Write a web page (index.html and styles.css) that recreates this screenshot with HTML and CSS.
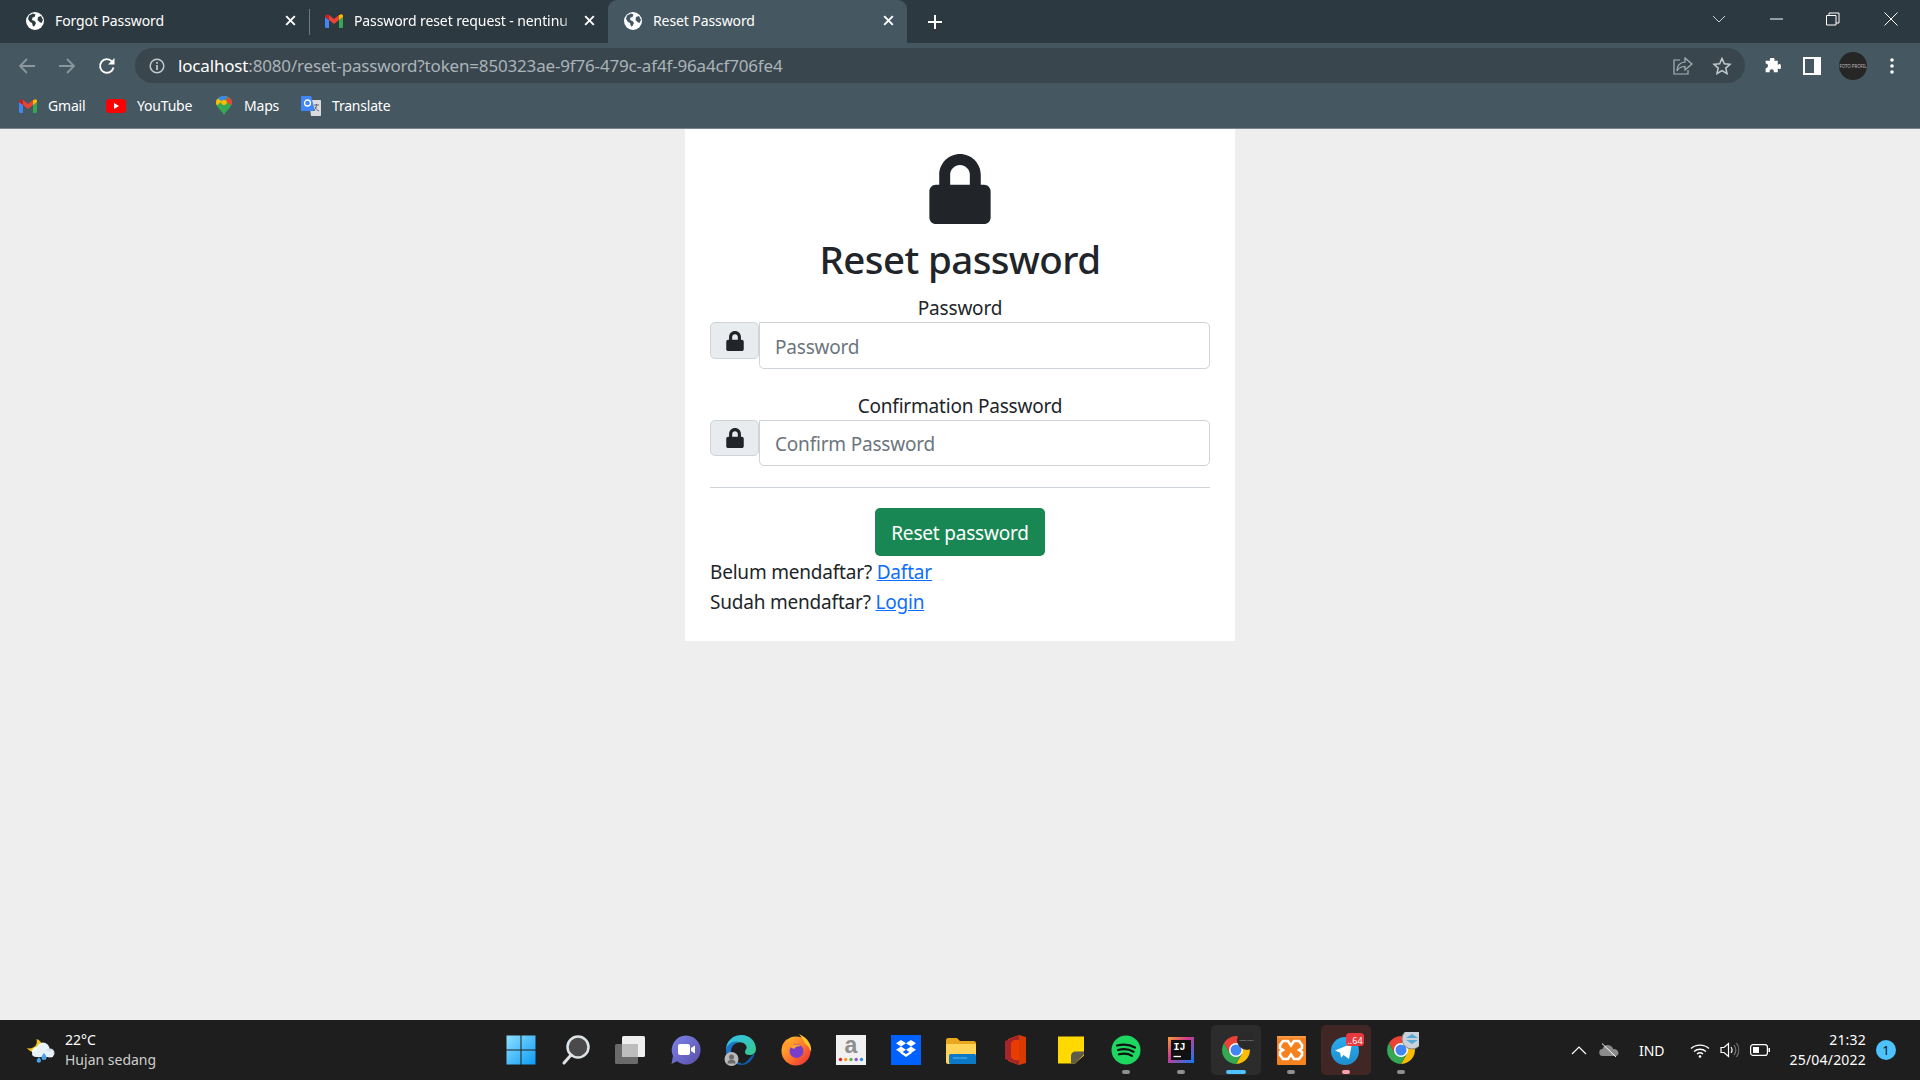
FILE: index.html
```html
<!DOCTYPE html>
<html lang="en">
<head>
    <meta charset="UTF-8">
    <meta name="viewport" content="width=device-width, initial-scale=1.0">
    <title>Reset Password</title>
    <link rel="stylesheet" href="styles.css">
</head>
<body>
    <header class="browser">
        <div class="tabstrip">
            <div class="tab">
                <svg class="favicon" viewBox="0 0 18 18"><circle cx="9" cy="9" r="9" fill="#fff"/><path d="M3 3.5l4-2 2.5 1-1 2.5-2 .5-.5 2.5 2.5 1 1.5 2-1.5 3-1.5.5-1-3.5-2-1-2-3zM12 5l3-1 2 4-1.5 3-2-1-2-2z" fill="#2d3a42"/></svg>
                <span class="tab-title">Forgot Password</span>
                <svg class="tab-close" viewBox="0 0 12 12"><path d="M2 2l8 8M10 2l-8 8" stroke="#fff" stroke-width="1.8"/></svg>
            </div>
            <div class="tab tab-sep">
                <svg class="favicon" viewBox="0 0 18 14"><path d="M0 3v9.500c0 .8.600 1.500 1.300 1.500H4V6z" fill="#4285f4"/><path d="M14 14h2.700c.7 0 1.300-.7 1.300-1.500V3l-4 3z" fill="#34a853"/><path d="M14 1v5l4-3V2c0-1.700-2.400-2.400-3-1z" fill="#fbbc04"/><path d="M4 6V1l5 4 5-4v5l-5 4z" fill="#ea4335"/><path d="M0 3l4 3V1C3 .3 0 0 0 3z" fill="#c5221f"/></svg>
                <span class="tab-title tab-fade">Password reset request - nentinu</span>
                <svg class="tab-close" viewBox="0 0 12 12"><path d="M2 2l8 8M10 2l-8 8" stroke="#fff" stroke-width="1.8"/></svg>
            </div>
            <div class="tab tab-active">
                <svg class="favicon" viewBox="0 0 18 18"><circle cx="9" cy="9" r="9" fill="#fff"/><path d="M3 3.5l4-2 2.5 1-1 2.5-2 .5-.5 2.5 2.5 1 1.5 2-1.5 3-1.5.5-1-3.5-2-1-2-3zM12 5l3-1 2 4-1.5 3-2-1-2-2z" fill="#455761"/></svg>
                <span class="tab-title">Reset Password</span>
                <svg class="tab-close" viewBox="0 0 12 12"><path d="M2 2l8 8M10 2l-8 8" stroke="#fff" stroke-width="1.8"/></svg>
            </div>
            <svg class="new-tab" viewBox="0 0 16 16"><path d="M8 1v14M1 8h14" stroke="#fff" stroke-width="2"/></svg>
            <div class="window-controls">
                <svg class="win-chevron" viewBox="0 0 14 8"><path d="M1 1l6 6 6-6" fill="none" stroke="#c8d0d4"/></svg>
                <svg class="win-btn" viewBox="0 0 14 14"><path d="M0 7h13" stroke="#fff"/></svg>
                <svg class="win-btn win-restore" viewBox="0 0 14 14"><path d="M.5 3.5H10V13H.5zM3 3.5V1h10v10h-3" fill="none" stroke="#fff"/></svg>
                <svg class="win-btn" viewBox="0 0 14 14"><path d="M.5.5l13 13M13.5.5l-13 13" stroke="#fff"/></svg>
            </div>
        </div>
        <div class="toolbar">
            <svg class="nav-icon" viewBox="0 0 18 18"><path d="M17 9H2M9 2L2 9l7 7" fill="none" stroke="#8b979e" stroke-width="1.8"/></svg>
            <svg class="nav-icon" viewBox="0 0 18 18"><path d="M1 9h15M9 2l7 7-7 7" fill="none" stroke="#8b979e" stroke-width="1.8"/></svg>
            <svg class="nav-icon" viewBox="0 0 18 18"><path d="M15.5 10.5A6.800 6.800 0 1 1 14 4.500" fill="none" stroke="#fff" stroke-width="1.9"/><path d="M16.5 1v6.500H10z" fill="#fff"/></svg>
            <div class="omnibox">
                <svg class="site-info" viewBox="0 0 16 16"><circle cx="8" cy="8" r="6.800" fill="none" stroke="#c4cbcf" stroke-width="1.5"/><path d="M8 7v5M8 4v1.800" stroke="#c4cbcf" stroke-width="1.7"/></svg>
                <span class="url"><span class="url-host">localhost</span>:8080/reset-password?token=850323ae-9f76-479c-af4f-96a4cf706fe4</span>
                <svg class="omni-icon" viewBox="0 0 20 18"><path d="M12 1l7 6-7 6V9.500C8 9.500 5.500 11 4 14c0-5 3-8.500 8-9zM7 3H1v14h14v-4" fill="none" stroke="#a9b3b8" stroke-width="1.2"/></svg>
                <svg class="omni-icon" viewBox="0 0 20 18"><path d="M10 1.500l2.400 5.200 5.600.6-4.200 3.800 1.200 5.500-5-2.900-5 2.900 1.200-5.500L2 7.300l5.600-.6z" fill="none" stroke="#c4cbcf" stroke-width="1.5"/></svg>
            </div>
            <div class="toolbar-actions">
                <svg class="action-icon action-puzzle" viewBox="0 0 18 18"><path d="M7 1.500h3.500a2 2 0 0 1 0 2.500H14v4a2 2 0 0 1 3 0v3a2 2 0 0 1-3 0v4H10a2 2 0 1 0-3.500 0H2.500v-4a2 2 0 1 0 0-4.500V4H7a2 2 0 0 1 0-2.500z" fill="#fff" transform="translate(0 .5)"/></svg>
                <svg class="action-icon" viewBox="0 0 18 18"><path d="M0 0h18v18H0zM2 2v14h9V2z" fill="#fff" fill-rule="evenodd"/></svg>
                <div class="avatar">FOTO PROFIL</div>
                <svg class="action-dots" viewBox="0 0 4 16"><circle cx="2" cy="2" r="1.800" fill="#fff"/><circle cx="2" cy="8" r="1.800" fill="#fff"/><circle cx="2" cy="14" r="1.800" fill="#fff"/></svg>
            </div>
        </div>
        <div class="bookmarks">
            <a class="bookmark bookmark-gmail">
                <svg class="bookmark-icon" viewBox="0 0 18 14"><path d="M0 3v9.500c0 .8.600 1.500 1.300 1.500H4V6z" fill="#4285f4"/><path d="M14 14h2.700c.7 0 1.300-.7 1.300-1.500V3l-4 3z" fill="#34a853"/><path d="M14 1v5l4-3V2c0-1.700-2.400-2.400-3-1z" fill="#fbbc04"/><path d="M4 6V1l5 4 5-4v5l-5 4z" fill="#ea4335"/><path d="M0 3l4 3V1C3 .3 0 0 0 3z" fill="#c5221f"/></svg>
                Gmail
            </a>
            <a class="bookmark bookmark-youtube">
                <svg class="bookmark-icon" viewBox="0 0 20 14"><rect width="20" height="14" rx="3.500" fill="#f00"/><path d="M8 4l5 3-5 3z" fill="#fff"/></svg>
                YouTube
            </a>
            <a class="bookmark bookmark-maps">
                <svg class="bookmark-icon" viewBox="0 0 16 22" preserveAspectRatio="none"><path d="M8 22C6 17 0 13 0 7.500 0 3 3.500 0 8 0s8 3 8 7.500C16 13 10 17 8 22z" fill="#34a853"/><path d="M2 3l4 3-5 5C.3 9.800 0 8.600 0 7.500 0 5.800.7 4.200 2 3z" fill="#fbbc04"/><path d="M2 3C3.500 1 5.800 0 8 0c1.300 0 2.500.3 3.500.8L6 6z" fill="#4285f4"/><path d="M11.500.8C14 2 16 4.500 16 7.500c0 1.100-.3 2.200-.8 3.300L10 6z" fill="#ea4335"/><circle cx="8" cy="7.500" r="2.800" fill="#fbbc04"/></svg>
                Maps
            </a>
            <a class="bookmark bookmark-translate">
                <svg class="bookmark-icon" viewBox="0 0 20 20"><path d="M8 4h11c.6 0 1 .4 1 1v14c0 .6-.4 1-1 1H10z" fill="#dadce0"/><path d="M1 0h9l4 15H1c-.6 0-1-.4-1-1V1c0-.6.400-1 1-1z" fill="#4285f4"/><circle cx="6.500" cy="7" r="3" fill="none" stroke="#fff" stroke-width="1.3"/><path d="M13 9h5M15.500 8v1.500c0 2-1.500 4-3 5M14 11c.8 2 2 3 4 4" fill="none" stroke="#5f6368"/></svg>
                Translate
            </a>
        </div>
    </header>

    <main class="page">
        <div class="card">
            <svg class="card-lock" viewBox="0 0 448 512"><path d="M400 224h-24v-72C376 68.200 307.800 0 224 0S72 68.200 72 152v72H48c-26.500 0-48 21.500-48 48v192c0 26.500 21.500 48 48 48h352c26.500 0 48-21.500 48-48V272c0-26.500-21.500-48-48-48zm-104 0H152v-72c0-39.700 32.300-72 72-72s72 32.300 72 72v72z"/></svg>
            <h1 class="card-title">Reset password</h1>
            <form>
                <label class="field-label" for="password">Password</label>
                <div class="input-group">
                    <span class="addon"><svg class="addon-lock" viewBox="0 0 448 512"><path d="M400 224h-24v-72C376 68.200 307.800 0 224 0S72 68.200 72 152v72H48c-26.500 0-48 21.500-48 48v192c0 26.500 21.500 48 48 48h352c26.500 0 48-21.500 48-48V272c0-26.500-21.500-48-48-48zm-104 0H152v-72c0-39.700 32.300-72 72-72s72 32.300 72 72v72z"/></svg></span>
                    <input class="field" id="password" type="password" placeholder="Password">
                </div>
                <label class="field-label" for="confirm">Confirmation Password</label>
                <div class="input-group input-group-short">
                    <span class="addon"><svg class="addon-lock" viewBox="0 0 448 512"><path d="M400 224h-24v-72C376 68.200 307.800 0 224 0S72 68.200 72 152v72H48c-26.500 0-48 21.500-48 48v192c0 26.500 21.500 48 48 48h352c26.500 0 48-21.500 48-48V272c0-26.500-21.500-48-48-48zm-104 0H152v-72c0-39.700 32.300-72 72-72s72 32.300 72 72v72z"/></svg></span>
                    <input class="field" id="confirm" type="password" placeholder="Confirm Password">
                </div>
                <hr class="divider">
                <button class="submit" type="submit">Reset password</button>
            </form>
            <p class="card-link">Belum mendaftar? <a href="#">Daftar</a></p>
            <p class="card-link">Sudah mendaftar? <a href="#">Login</a></p>
        </div>
    </main>

    <footer class="taskbar">
        <div class="weather">
            <svg class="weather-icon" viewBox="0 0 28 26"><path d="M0 11c3 1 7 0 9-3 1-2 1-4 .5-6 4 1 6 5 5 8-1 4-5 6-9 5-2-.5-4-2-5.500-4z" fill="#f5c518"/><circle cx="10" cy="15" r="5" fill="#fff"/><circle cx="16" cy="12" r="6.500" fill="#eaf2fa"/><circle cx="23" cy="16" r="4.500" fill="#d6e2ee"/><path d="M8 14h18v6H10c-3 0-5-1-5-3z" fill="#e8f0f8"/><path d="M17 16c1.500 2 2.500 3 2.500 4.500a2.500 2.500 0 0 1-5 0c0-1.500 1-2.500 2.500-4.500zM12 20c1 1.500 2 2.500 2 3.500a2.200 2.200 0 0 1-4.400 0c0-1 1.400-2 2.400-3.500z" fill="#4aa3e8"/></svg>
            <div class="weather-text">
                <div class="weather-temp">22°C</div>
                <div class="weather-desc">Hujan sedang</div>
            </div>
        </div>
        <div class="task-icons">
            <div class="task">
                <svg class="task-icon" viewBox="0 0 36 36"><defs><linearGradient id="win" x1="0" y1="0" x2="1" y2="1"><stop offset="0" stop-color="#8fe0ff"/><stop offset="1" stop-color="#0c9bf5"/></linearGradient></defs><path d="M3.500 3.500h14v14h-14zM18.500 3.500h14v14h-14zM3.500 18.500h14v14h-14zM18.500 18.500h14v14h-14z" fill="url(#win)"/></svg>
            </div>
            <div class="task">
                <svg class="task-icon" viewBox="0 0 36 36"><circle cx="20" cy="15" r="10.500" fill="#4a4a4a" stroke="#dde3e6" stroke-width="2.5"/><path d="M13 23l-7 8" stroke="#dde3e6" stroke-width="3" stroke-linecap="round"/></svg>
            </div>
            <div class="task">
                <svg class="task-icon" viewBox="0 0 36 36"><rect x="9" y="4" width="23" height="21" rx="1.500" fill="#efefef"/><rect x="2" y="12" width="23" height="20" rx="1.500" fill="#6a6a6a"/><rect x="9" y="12" width="16" height="13" fill="#bdbdbd"/></svg>
            </div>
            <div class="task">
                <svg class="task-icon" viewBox="0 0 36 36"><defs><linearGradient id="chat" x1="0" y1="0" x2="1" y2="1"><stop offset="0" stop-color="#7b83eb"/><stop offset="1" stop-color="#5b4fa8"/></linearGradient></defs><path d="M18 3.500a14.500 14.500 0 1 1-9 25.800L3.500 32 5 24A14.500 14.500 0 0 1 18 3.500z" fill="url(#chat)"/><rect x="10" y="12" width="12" height="11" rx="2" fill="#fff"/><path d="M23 16l4-2.500v8l-4-2.500z" fill="#fff"/></svg>
            </div>
            <div class="task">
                <svg class="task-icon" viewBox="0 0 36 36"><defs><linearGradient id="edge" x1="0" y1="0" x2="1" y2="1"><stop offset="0" stop-color="#35c1f1"/><stop offset="1" stop-color="#37c88a"/></linearGradient></defs><path d="M3 18C3 9 10 3 18.500 3 27 3 33 9.500 33 17c0 4-3 6-6.500 6-3 0-4.500-1-4.500-3 0-3 3-3 1-6.500C21 10 16 9.500 12 11.500 7 14 4 17 3 18z" fill="url(#edge)"/><path d="M3 18c0-4 6-10 13-8-6 1-8 6-8 10 0 6 5 11 11 11.500C11 34 3 28 3 18z" fill="#1b74c9"/><path d="M32 21c-2 7-7 12-13 12-5 0-7-2-7-2 5 2 10 1 13-3 2-2 4-5 7-7z" fill="#0f5cac"/><circle cx="8.500" cy="27" r="7" fill="#b9b9b9"/><circle cx="8.500" cy="25" r="2.500" fill="#6b6b6b"/><path d="M4.500 31.500c0-3 2-4 4-4s4 1 4 4z" fill="#6b6b6b"/></svg>
            </div>
            <div class="task">
                <svg class="task-icon" viewBox="0 0 36 36"><defs><linearGradient id="fox" x1="0" y1="0" x2="1" y2="1"><stop offset="0" stop-color="#ffcb2e"/><stop offset=".6" stop-color="#ff6a2b"/><stop offset="1" stop-color="#e3243e"/></linearGradient></defs><circle cx="18" cy="19" r="14.500" fill="url(#fox)"/><path d="M21 2c9 4 13 11 12 18-1-3-3-7-6-8-1-4-4-7-6-10z" fill="#ffc42e"/><path d="M4 15c1-4 3-6 5-8 0 2 1 3 2 4 3-1 6-1 8 0-5 0-9 2-10 6-2 0-4-1-5-2z" fill="#ff9a2b"/><circle cx="18.500" cy="19" r="7" fill="#7a3fc9"/><path d="M12 15c3-3 8-3 11-1-4 0-6 1-7 3z" fill="#ffa52e"/></svg>
            </div>
            <div class="task">
                <svg class="task-icon" viewBox="0 0 36 36"><rect x="3" y="3" width="30" height="30" fill="#f1f1f1"/><text class="amazon-letter" x="18" y="21" text-anchor="middle">a</text><circle cx="7.500" cy="27.500" r="1.700" fill="#e02020"/><circle cx="12.700" cy="27.500" r="1.700" fill="#f59a23"/><circle cx="18" cy="27.500" r="1.700" fill="#5bb544"/><circle cx="23.200" cy="27.500" r="1.700" fill="#9c4fd0"/><circle cx="28.500" cy="27.500" r="1.700" fill="#2e8fe0"/></svg>
            </div>
            <div class="task">
                <svg class="task-icon" viewBox="0 0 36 36"><rect x="3" y="3" width="30" height="30" fill="#0061fe"/><path d="M13 8l5 3.200-5 3.200-5-3.200zM23 8l5 3.200-5 3.200-5-3.200zM13 14.600l5 3.200-5 3.200-5-3.200zM23 14.600l5 3.200-5 3.200-5-3.200zM18 22l5-3 .5.300v2l-5.500 3.700-5.500-3.700v-2l.5-.300z" fill="#fff"/></svg>
            </div>
            <div class="task">
                <svg class="task-icon" viewBox="0 0 36 36"><path d="M3 8c0-1 .8-2 2-2h9l3 3h14c1 0 2 1 2 2v3H3z" fill="#e8a71c"/><path d="M3 12h30v18c0 1-1 2-2 2H5c-1 0-2-1-2-2z" fill="#ffd458"/><rect x="6" y="22" width="27" height="10" rx="1.500" fill="#0b78c8"/><path d="M10 26h14" stroke="#3da5ea" stroke-width="1.5"/></svg>
            </div>
            <div class="task">
                <svg class="task-icon" viewBox="0 0 36 36"><path d="M10 7l11-4 7 2v26l-7 2-11-4z" fill="#d83b01"/><path d="M7 9l14-6v5l-8 3v14l8 3v5L7 27z" fill="#a4262c"/><path d="M21 8h-5l-3 3v14l3 3h5z" fill="#eb3c00"/></svg>
            </div>
            <div class="task">
                <svg class="task-icon" viewBox="0 0 36 36"><path d="M5 4.500h26v19L22 31.500H5z" fill="#ffd900"/><path d="M31 19.500v2c0 .5-.2 1-.6 1.400l-7.800 8c-.400.400-.9.600-1.400.600H18V24a4.500 4.500 0 0 1 4.500-4.500z" fill="#5e5a4c"/></svg>
            </div>
            <div class="task task-running">
                <svg class="task-icon" viewBox="0 0 36 36"><circle cx="18" cy="18" r="14.500" fill="#1ed760"/><path d="M9 13.500c6-1.500 13-1 18 2M10 18c5-1.300 11-1 15.500 1.800M11 22.300c4.500-1 9.500-.8 13 1.500" fill="none" stroke="#111" stroke-width="2.2" stroke-linecap="round"/></svg>
            </div>
            <div class="task task-running">
                <svg class="task-icon" viewBox="0 0 36 36"><defs><linearGradient id="ij" x1="0" y1="0" x2="1" y2="1"><stop offset="0" stop-color="#f8a12d"/><stop offset=".4" stop-color="#d3398c"/><stop offset="1" stop-color="#087cfa"/></linearGradient></defs><rect x="5" y="5" width="26" height="26" fill="url(#ij)"/><rect x="8" y="8" width="20" height="20" fill="#111"/><text class="ij-letters" x="10.500" y="17.500">IJ</text><path d="M10.500 24.500H18" stroke="#fff" stroke-width="1.3"/></svg>
            </div>
            <div class="task task-running task-active">
                <div class="task-tile">
                    <svg class="task-icon" viewBox="0 0 36 36"><path d="M5.900 11A14 14 0 0 1 30.100 11H18L11.900 21.500z" fill="#ea4335"/><path d="M30.100 11A14 14 0 0 1 18 32l6.100-10.500L18 11z" fill="#fbbc04"/><path d="M18 32A14 14 0 0 1 5.900 11l6 10.500h12.200z" fill="#34a853"/><circle cx="18" cy="18" r="7" fill="#fff"/><circle cx="18" cy="18" r="5.500" fill="#4285f4"/><circle cx="29" cy="8" r="10" fill="#2a2a2a"/><text class="mini-profile" x="29" y="9" text-anchor="middle">FOTO PROFIL</text></svg>
                </div>
            </div>
            <div class="task task-running">
                <svg class="task-icon" viewBox="0 0 36 36"><rect x="4" y="4" width="29" height="29" rx="1" fill="#f5811f"/><path d="M4 5h29" stroke="#f9ad6b"/><path d="M10 9h5l3 4.500L21 9h5l3 4v3l-3 2 3 2v3l-3 4h-5l-3-4.500L15 27h-5l-3-4v-3l3-2-3-2v-3z" fill="none" stroke="#fff" stroke-width="2.6"/></svg>
            </div>
            <div class="task task-running task-alert">
                <div class="task-tile task-tile-alert">
                    <svg class="task-icon" viewBox="0 0 36 36"><defs><linearGradient id="tg" x1="0" y1="0" x2="0" y2="1"><stop offset="0" stop-color="#2aabee"/><stop offset="1" stop-color="#1f8fce"/></linearGradient></defs><circle cx="17" cy="19" r="14" fill="url(#tg)"/><path d="M7 18.500l17-7-3 15.500-5.500-4-2.500 2.800-.8-5z" fill="#fff"/><rect x="18" y="1" width="18" height="13" rx="3.500" fill="#e8393f"/><text class="badge-count" x="27" y="11.500" text-anchor="middle">..64</text></svg>
                </div>
            </div>
            <div class="task task-running">
                <svg class="task-icon" viewBox="0 0 36 36"><path d="M5.900 11A14 14 0 0 1 30.100 11H18L11.900 21.500z" fill="#ea4335"/><path d="M30.100 11A14 14 0 0 1 18 32l6.100-10.500L18 11z" fill="#fbbc04"/><path d="M18 32A14 14 0 0 1 5.900 11l6 10.500h12.200z" fill="#34a853"/><circle cx="18" cy="18" r="7" fill="#fff"/><circle cx="18" cy="18" r="5.500" fill="#4285f4"/><circle cx="29" cy="7" r="10" fill="#c9d2d8" stroke="#888"/><path d="M23 6l6-4 6 4zM23 8l6 4 6-4z" fill="#58a8d8"/></svg>
            </div>
        </div>
        <div class="tray">
            <svg class="tray-chevron" viewBox="0 0 16 10"><path d="M1 9l7-7 7 7" fill="none" stroke="#fff" stroke-width="1.2"/></svg>
            <svg class="tray-cloud" viewBox="0 0 20 14"><path d="M4 13a3.500 3.500 0 0 1-.5-7C4.500 2.500 8 1 11 2.500c2 1 3 2.500 3 3.500 3-.5 5.500 1.500 5.500 4s-2 3-3.500 3z" fill="#8b8b8b"/><path d="M3 .5l14 13.500" stroke="#fff"/></svg>
            <span class="tray-lang">IND</span>
            <svg class="tray-wifi" viewBox="0 0 20 15"><path d="M1 5.500c5-4.500 13-4.500 18 0M4 8.500c3.500-3 8.500-3 12 0M7 11c1.800-1.500 4.200-1.500 6 0" fill="none" stroke="#fff" stroke-width="1.3"/><circle cx="10" cy="13.500" r="1.300" fill="#fff"/></svg>
            <svg class="tray-volume" viewBox="0 0 20 16"><path d="M1 5.500h3L8.500 1.500v13L4 10.500H1z" fill="none" stroke="#fff" stroke-width="1.2"/><path d="M11 5c1.300 1.800 1.300 4.200 0 6" fill="none" stroke="#fff" stroke-width="1.2"/><path d="M14 3c2.200 3 2.200 7 0 10M16.500 1c3 4.200 3 9.800 0 14" fill="none" stroke="#777" stroke-width="1.2"/></svg>
            <svg class="tray-battery" viewBox="0 0 20 12"><rect x=".6" y=".6" width="16.800" height="10.800" rx="2.500" fill="none" stroke="#fff" stroke-width="1.2"/><rect x="3" y="3" width="6" height="6" fill="#fff"/><rect x="18.500" y="4" width="1.500" height="4" fill="#fff"/></svg>
            <div class="clock">
                <div>21:32</div>
                <div>25/04/2022</div>
            </div>
            <span class="notify">1</span>
        </div>
    </footer>
</body>
</html>
```

FILE: styles.css
```css
* { box-sizing: border-box; }
html, body { height: 100%; }
body { margin: 0; display: flex; flex-direction: column; height: 1080px; overflow: hidden; background-color: #eeeeee; font-family: "Noto Sans", "Open Sans", sans-serif; color: #212529; }

.browser { flex: none; color: #fff; }
.tabstrip { display: flex; align-items: center; height: 43px; background-color: #2d3941; padding-left: 10px; }
.tab { display: flex; align-items: center; width: 299px; height: 43px; padding: 0 12px 2px 16px; font-size: 14px; letter-spacing: -.1px; border-top-left-radius: 9px; border-top-right-radius: 9px; }
.tab-sep { position: relative; }
.tab-sep::before { content: ""; position: absolute; left: 0; top: 9px; height: 26px; width: 1px; background-color: #6b7980; }
.tab-active { background-color: #455761; }
.favicon { width: 18px; height: 18px; flex: none; }
.tab-title { flex: 1; margin-left: 11px; white-space: nowrap; overflow: hidden; }
.tab-fade { -webkit-mask-image: linear-gradient(to right, #000 92%, transparent); mask-image: linear-gradient(to right, #000 92%, transparent); margin-right: 6px; }
.tab-close { width: 13px; height: 13px; flex: none; }
.new-tab { width: 16px; height: 16px; margin-left: 20px; }

.window-controls { display: flex; align-items: center; margin-left: auto; padding-right: 22px; padding-bottom: 6px; }
.win-chevron { width: 14px; height: 8px; margin-right: 44px; }
.win-btn { width: 14px; height: 14px; margin-left: 44px; }
.win-chevron + .win-btn { margin-left: 0; }
.win-btn.win-restore { margin-left: 42px; }

.toolbar { display: flex; align-items: center; height: 40px; background-color: #455761; padding: 5px 0 0 18px; }
.nav-icon { width: 18px; height: 18px; margin-right: 22px; flex: none; }
.nav-icon:nth-child(3) { margin-right: 18px; }
.omnibox { display: flex; align-items: center; width: 1610px; height: 35px; margin-left: 1px; border-radius: 18px; background-color: #3a464e; padding: 0 13px 0 14px; }
.site-info { width: 16px; height: 16px; flex: none; }
.url { flex: 1; margin-left: 13px; font-size: 17px; letter-spacing: -.17px; color: #aab4b9; white-space: nowrap; }
.url-host { color: #fff; }
.omni-icon { width: 20px; height: 18px; margin-left: 19px; }
.toolbar-actions { display: flex; align-items: center; margin-left: 18px; }
.action-icon { width: 18px; height: 18px; margin-right: 18px; flex: none; }
.action-puzzle { width: 19px; height: 19px; margin-right: 21px; }
.avatar { width: 28px; height: 28px; margin-right: 23px; border-radius: 50%; background-color: #262626; color: #bbb; font-size: 4.5px; line-height: 28px; text-align: center; white-space: nowrap; letter-spacing: -.1px; }
.action-dots { width: 4px; height: 16px; }

.bookmarks { display: flex; align-items: center; height: 46px; background-color: #455761; border-bottom: 1px solid #76858d; padding-left: 19px; font-size: 14px; letter-spacing: -.2px; }
.bookmark { display: flex; align-items: center; }
.bookmark-icon { flex: none; margin-right: 11px; }
.bookmark-gmail { width: 87px; }
.bookmark-gmail .bookmark-icon { width: 18px; height: 14px; }
.bookmark-youtube { width: 110px; }
.bookmark-youtube .bookmark-icon { width: 20px; height: 14px; }
.bookmark-maps { width: 85px; }
.bookmark-maps .bookmark-icon { width: 16px; height: 19px; margin-right: 12px; }
.bookmark-translate .bookmark-icon { width: 20px; height: 20px; }

.page { flex: 1; display: flex; justify-content: center; align-items: flex-start; background-color: #eeeeee; }
.card { width: 550px; height: 512px; padding: 25px 25px 0; background-color: #fff; text-align: center; }
.card-lock { display: block; width: 62px; height: 70px; margin: 0 auto 11px; fill: #212529; }
.card-title { margin: 0 0 9px; font-size: 38.5px; font-weight: 500; line-height: 48px; letter-spacing: -.6px; }
.field-label { display: block; height: 30px; font-size: 19px; line-height: 32px; letter-spacing: -.2px; }
.input-group { display: flex; align-items: flex-start; margin-bottom: 21px; }
.addon { display: flex; justify-content: center; padding-top: 8px; width: 49px; height: 37px; background-color: #e9ecef; border: 1px solid #ced4da; border-radius: 5px; }
.addon-lock { width: 18px; height: 20px; fill: #212529; }
.field { flex: 1; height: 47px; padding: 2px 15px 0; border: 1px solid #ced4da; border-radius: 0 5px 5px 5px; background-color: #fff; font-family: inherit; font-size: 19px; letter-spacing: -.2px; }
.field::placeholder { color: #6c757d; opacity: 1; }
.input-group-short .addon { height: 36px; padding-top: 7px; }
.input-group-short .field { height: 46px; }
.divider { height: 1px; margin: 0 0 20px; border: 0; background-color: #ced4da; }
.submit { display: block; width: 170px; height: 48px; margin: 0 auto 1px; padding: 2px 0 0; border: none; border-radius: 5px; background-color: #198754; color: #fff; font-family: inherit; font-size: 19px; letter-spacing: -.2px; cursor: pointer; }
.card-link { margin: 0; font-size: 19px; line-height: 30px; letter-spacing: -.2px; text-align: left; }
.card-link a { color: #0d6efd; }

.taskbar { flex: none; display: flex; align-items: center; height: 60px; background-color: #1e1e1e; color: #fff; }
.weather { display: flex; align-items: center; width: 493px; padding-left: 27px; }
.weather-icon { width: 28px; height: 26px; margin-right: 10px; flex: none; }
.weather-text { font-size: 14px; line-height: 20px; }
.weather-desc { color: #cfcfcf; }
.task-icons { display: flex; }
.task { position: relative; display: flex; align-items: center; justify-content: center; width: 55px; height: 60px; }
.task-icon { width: 36px; height: 36px; }
.task-tile { display: flex; align-items: center; justify-content: center; width: 50px; height: 50px; border-radius: 5px; background-color: #2c2c2c; }
.task-tile-alert { background-color: #412626; }
.task-running::after { content: ""; position: absolute; left: 50%; bottom: 6px; width: 8px; height: 4px; margin-left: -4px; border-radius: 2px; background-color: #8f8f8f; }
.task-active::after { width: 20px; margin-left: -10px; background-color: #4cc2ff; }
.task-alert::after { background-color: #f5a0ab; }
.amazon-letter { font-family: "Liberation Sans", sans-serif; font-size: 23px; font-weight: 700; fill: #8e8e8e; }
.ij-letters { font-size: 10px; font-weight: 700; fill: #fff; font-family: "Liberation Mono", monospace; }
.mini-profile { font-size: 2.5px; fill: #aaa; }
.badge-count { font-size: 9px; fill: #fff; }

.tray { display: flex; align-items: center; margin-left: auto; }
.tray-chevron { width: 16px; height: 10px; margin-right: 12px; }
.tray-cloud { width: 20px; height: 14px; margin-right: 20px; }
.tray-lang { font-size: 14px; margin-right: 25px; }
.tray-wifi { width: 20px; height: 15px; margin-right: 10px; }
.tray-volume { width: 20px; height: 16px; margin-right: 10px; }
.tray-battery { width: 20px; height: 12px; margin-right: 20px; }
.clock { font-size: 14px; line-height: 20px; letter-spacing: .2px; text-align: right; }
.notify { display: flex; align-items: center; justify-content: center; width: 20px; height: 20px; margin: 0 24px 0 10px; border-radius: 50%; background-color: #4cc2ff; color: #111; font-size: 13px; }
```
